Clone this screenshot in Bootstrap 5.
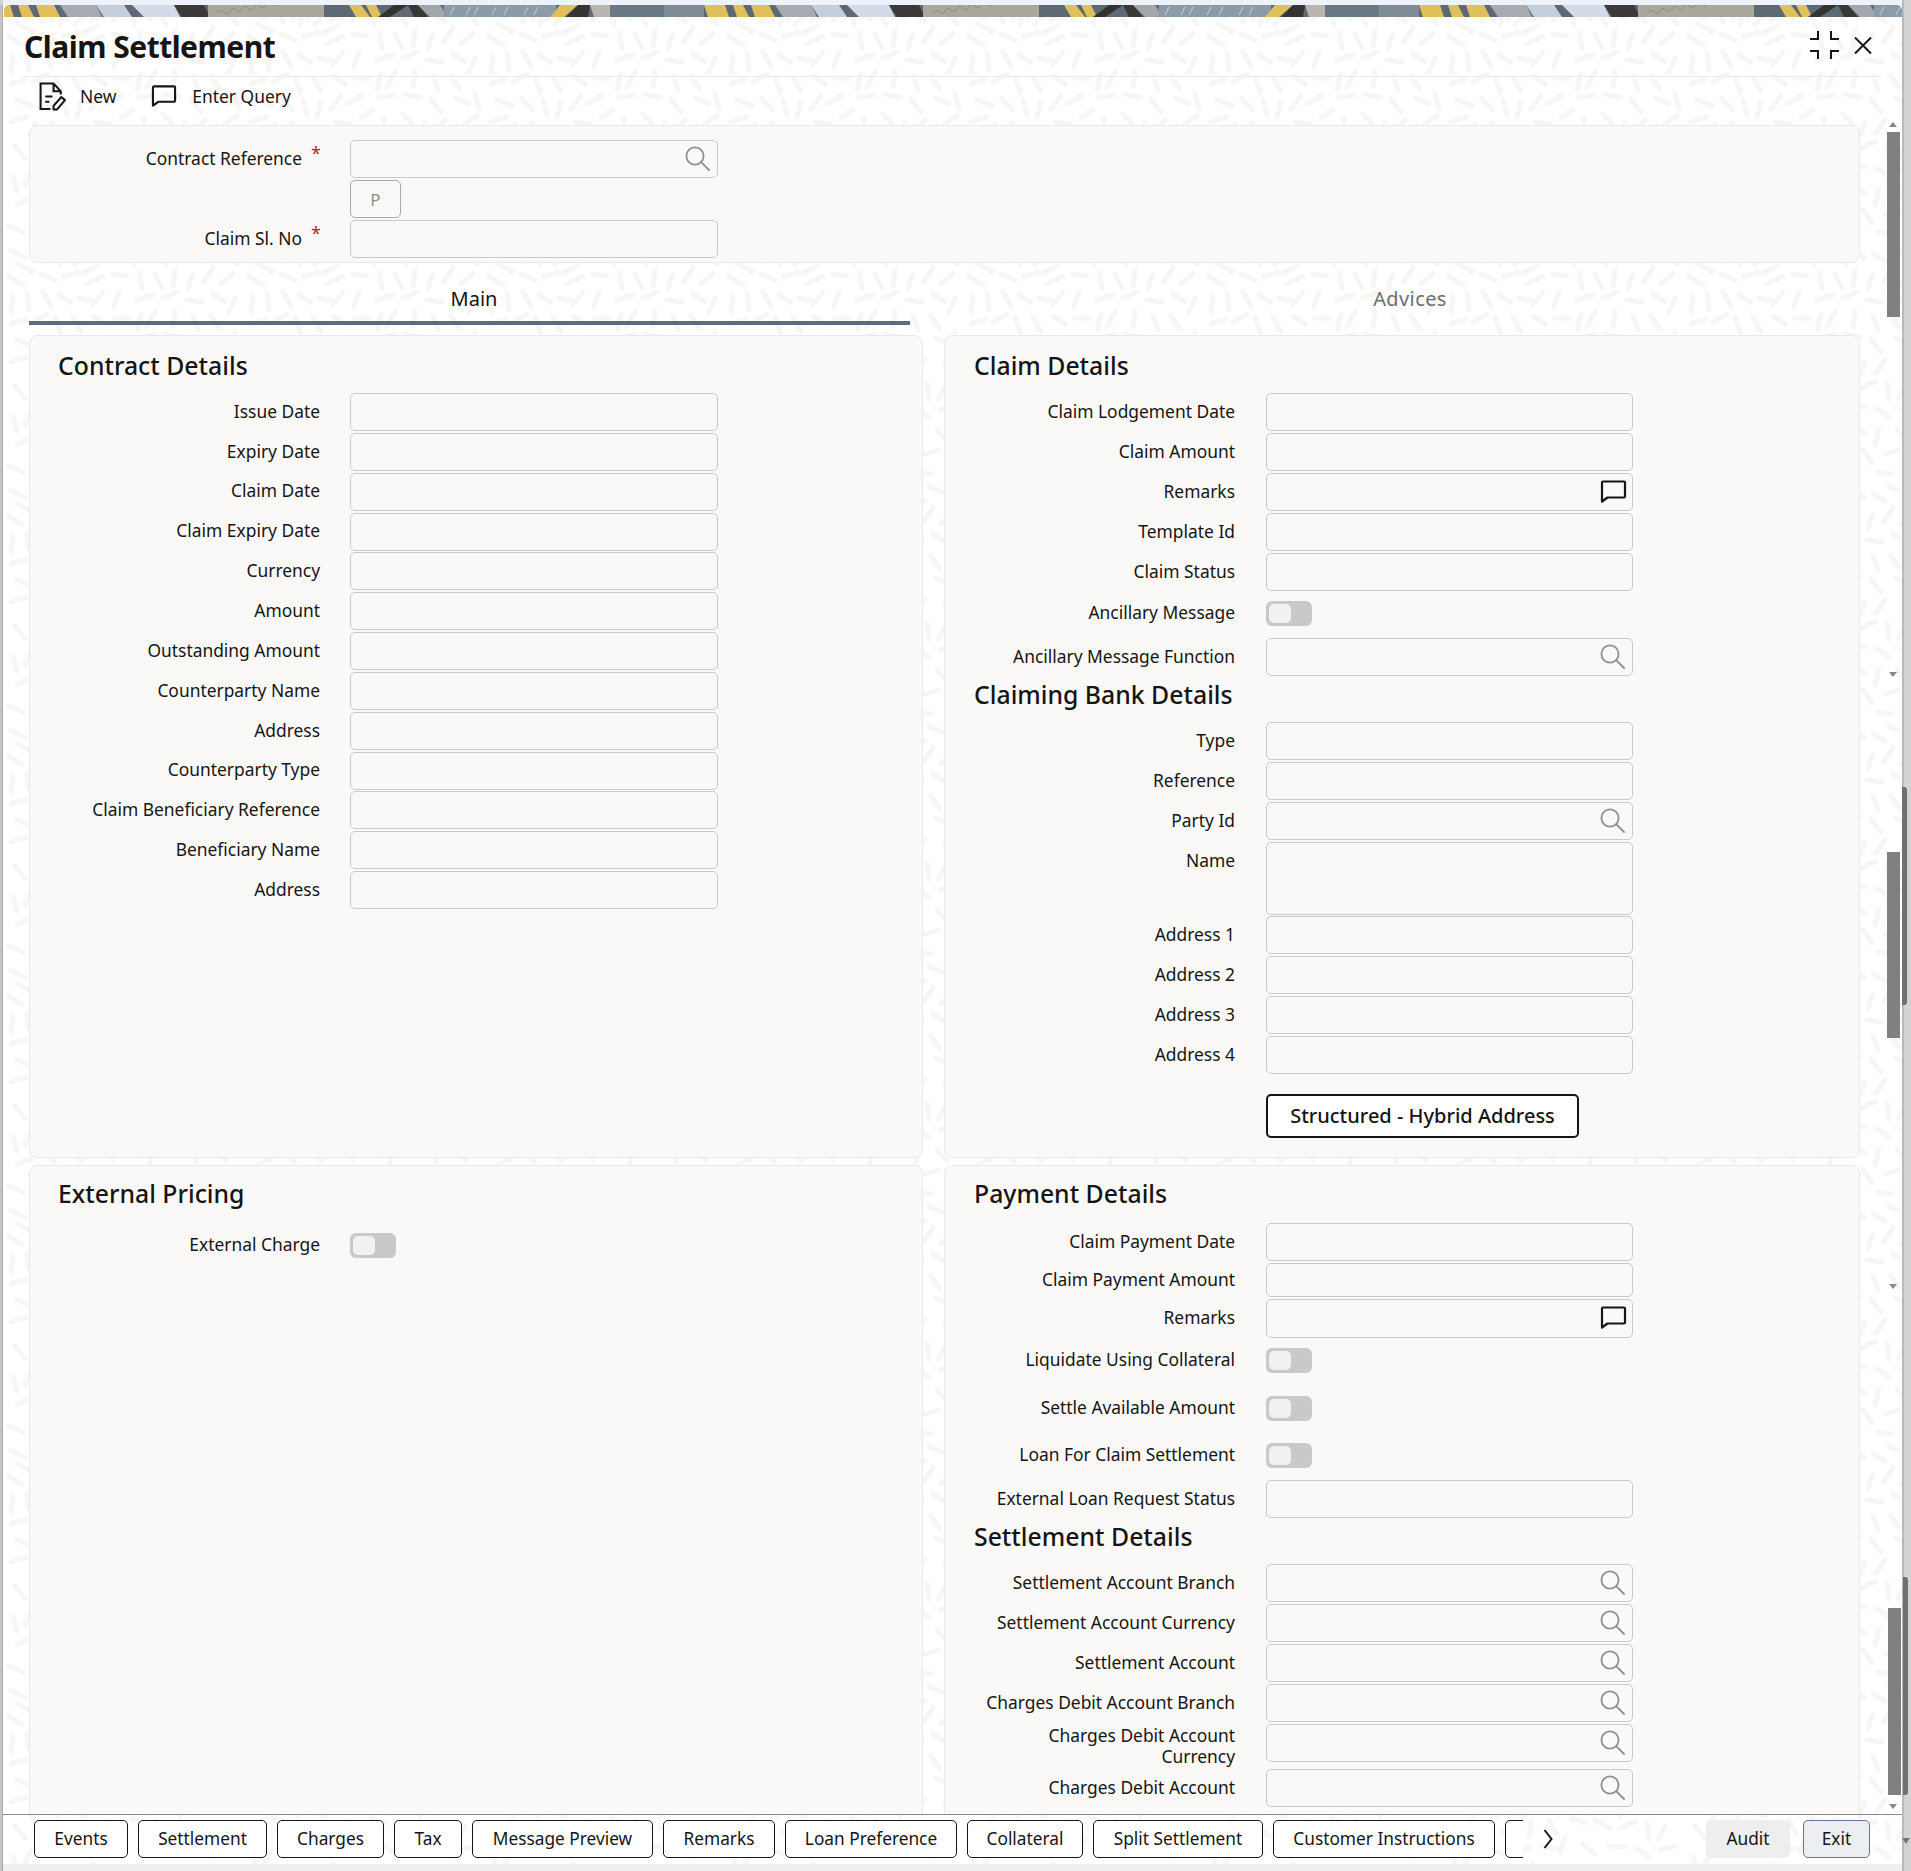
<!DOCTYPE html>
<html lang="en">
<head>
<meta charset="utf-8">
<title>Claim Settlement</title>
<link href="https://cdn.jsdelivr.net/npm/bootstrap@5.3.0/dist/css/bootstrap.min.css" rel="stylesheet">
<style>
html,body{margin:0;padding:0;width:1911px;height:1871px;overflow:hidden}
body{background:#d3d3d3;font-family:"Noto Sans","Open Sans",sans-serif;font-size:17.4px;line-height:21px;color:#161513}
.appx{position:relative;width:1911px;height:1871px;display:flex}
.sideL{width:3px;background:#c4c4c4;margin-top:5px;border-right:1px solid #a9a9a9}
.sideR{width:9px;background:#d3d3d3;border-left:2px solid #b9b9b9}
.winx{width:1899px;display:flex;flex-direction:column;height:1871px;background-color:#fff;
background-image:url("data:image/svg+xml,%3Csvg xmlns='http://www.w3.org/2000/svg' width='240' height='240'%3E%3Cpath fill='none' stroke='%23f6f6f5' stroke-width='5' stroke-linecap='round' d='M8 10l14 7M14 24l16 8M6 36l14 9M34 8l6 14M46 4l4 16M60 10l-3 15M72 6l-8 14M84 12l-12 12M94 26l-14 8M104 14l-16 6M116 6l-6 14M128 10l3 14M142 6l5 14M154 12l9 12M170 8l11 10M190 14l12 7M206 6l14 6M226 12l8 12M38 34l14 6M60 36l16-3M84 44l16-8M110 34l14 2M136 32l3 16M152 34l7 14M172 30l-2 16M190 34l-5 14M210 28l-9 13M230 34l-12 10M10 56l-2 16M24 54l2 15M40 52l8 14M56 54l12 9M76 58l15 3M100 52l-10 12M116 52l-5 15M134 60l16-5M160 58l14-6M184 60l15 2M210 54l12 8M232 58l-6 14M8 84l14-4M30 82l14-8M52 78l6 15M70 78l8 13M90 76l12 8M112 78l14 0M138 74l-4 15M152 72l-8 15M172 72l-2 14M190 76l5 14M208 76l8 12M14 100l15 6M38 98l12 12M60 100l4 14M78 102l-4 15M98 96l-10 13M118 96l-14 8M136 98l15-3M162 94l15 3M188 100l10 12M212 98l14 6M232 94l4 15M8 122l15-5M32 124l-2 15M48 122l7 14M68 130l14 7M92 122l14 2M118 118l12-9M140 118l4 16M160 114l10 11M182 122l-5 15M202 120l-9 13M222 124l12-8M12 146l10 12M34 150l14-3M60 152l14 8M88 142l-2 15M106 140l7 13M128 138l14 5M152 140l15 8M178 148l14-6M204 144l2 15M222 146l-7 13M10 176l4 15M28 170l-6 15M46 168l14 7M72 172l14-4M98 166l15 3M122 158l-5 15M140 164l12 10M166 166l15 1M194 168l12 9M218 170l14-4M14 204l14-5M40 192l12 10M66 190l12 11M90 184l-8 14M108 186l2 15M124 190l13 7M150 188l-3 15M168 186l14 7M196 190l-4 15M214 190l10 11M6 226l14 6M32 216l16-2M60 214l12 8M84 212l14 3M110 214l-7 14M128 212l13 10M154 212l14 8M180 210l9 13M202 214l14-4M226 214l8 14M44 232l13 2M76 232l14-4M124 232l14 2M160 232l14-3M196 232l12 2'/%3E%3C/svg%3E");}
.stripT{height:5px;background:#eef3fb;flex:none}
.bannerx{height:12px;margin-left:1px;flex:none;border-radius:5px 5px 0 0;overflow:hidden;display:block}
.headx{height:60px;margin:0 20px;padding:0 10px 0 1px;flex:none;border-bottom:1px solid #ebebe9}
.titlex{font-size:30px;line-height:40px;font-weight:700;margin:0;letter-spacing:-.5px}
.iconsx{gap:15px;margin-bottom:3px}
.toolx{height:48px;padding:0 0 10px 36px;flex:none}
.lnkx{color:#161513;text-decoration:none}
.tnew{margin-left:14px}
.lnk2{margin-left:35px}
.tenter{margin-left:15px}
.panelx{background:#faf9f7;border:1px solid #ebeae8;border-radius:8px;box-shadow:none}
.ptop{margin-left:26px;width:1831px;height:138px;padding-top:14px;flex:none}
.tabx{margin-left:26px;width:1831px;height:62px;flex:none;margin-bottom:10px;flex-wrap:nowrap}
.tabx .nav-item{flex:none}
.tabx .nav-link{height:62px;line-height:71px;padding:0;font-size:20px;text-align:center;color:#6f6e6c;border-radius:0;border-bottom:4px solid transparent}
.tabx .nav-link.active{color:#161513;border-bottom-color:#5f6b85;width:881px;padding-left:9px}
.tabx .tab2{width:940px;margin-left:30px;letter-spacing:.4px}
.areax{margin-left:26px;width:1831px;height:1479px;overflow:hidden;flex:none}
.gridx{display:grid;grid-template-columns:894px 916px;column-gap:21px;row-gap:7px}
.p1{height:823px}
.p2{height:680px}
.secx{font-size:24.8px;line-height:54px;height:57px;padding:2px 0 0 28px;margin:0;font-weight:500}
.p2 .secx{padding-top:0}
.sec2{height:44px;line-height:32px;padding:0 0 0 29px;font-size:24.8px;margin:0;font-weight:500}
.pr .secx{padding-left:29px}
.frow{display:flex;align-items:center;height:38px;margin-bottom:2px}
.pl .frow{margin-bottom:1.85px}
.flab{width:290px;margin:-1.5px 30px 0 0;text-align:right;flex:none}
.pr .flab{width:290px;margin-right:31px}
.ctlx{width:368px;height:100%;position:relative;flex:none}
.pr .ctlx{width:367px}
.finx{height:100%;min-height:0;padding:0 8px;background:#faf9f7;border:1px solid #cbcac8;border-radius:5px;display:block;resize:none}
.finx:disabled,.finx[readonly]{background:#faf9f7}
.icox{position:absolute;right:8px;top:6px;width:25px;height:25px;display:block}
.icoc{position:absolute;right:6px;top:7px;width:27px;height:23px;display:block}
.tgx{width:46px;height:25px;background:#c9c9c8;border-radius:6px;padding:3px 21px 3px 3px;flex:none}
.tgx i{display:block;width:22px;height:19px;background:#f2f1ef;border-radius:5px}
.ftg{height:25px}
.ftg1{margin-top:10px;margin-bottom:12px}
.ftg2{margin-top:10px;margin-bottom:23px}
.ftg3{margin-bottom:22px}
.ftg4{margin-bottom:12px}
.ftg5{margin-top:10px}
.fname{height:73px;margin-bottom:1px;align-items:flex-start}
.fname .flab{margin-top:0;padding-top:8px}
.h34{height:34px}
.h39{height:39px}
.mt6x{margin-top:7px}
.ftwo .flab{margin-top:5.5px}
.flab2{display:flex;justify-content:flex-end;align-items:center}
.starx{color:#b3261e;line-height:1;margin:0 1px 10px 9px;width:8px;font-size:18px;text-align:center}
.pbtn{width:51px;height:38px;padding:0;background:#faf9f7;border:1px solid #a9a9a7;border-radius:5px;color:#8f8f8d;font-size:17px;line-height:38px;display:block}
.hbtn{width:313px;height:44px;margin:20px 0 0 321px;padding:0;background:#fff;border:2px solid #161513;border-radius:5px;color:#161513;font-size:20px;font-weight:500;line-height:38px;display:block}
.botx{height:50px;border-top:1px solid #8a8a8a;padding:5px 32px 0 31px;flex:none;margin-top:0}
.bscroll{width:1489px;overflow:hidden;gap:10px;flex:none}
.fbtn{height:38px;padding:0;font-size:17.3px;line-height:34px;color:#161513;background:#fff;border:1px solid #161513;border-radius:5px;white-space:nowrap;flex:none}
.fbtn:hover{color:#161513;background:#fff}
.bw1{width:94px}.bw2{width:129px}.bw3{width:107px}.bw4{width:68px}.bw5{width:181px}.bw6{width:112px}.bw7{width:172px}.bw8{width:116px}.bw9{width:170px}.bw10{width:222px}.bw11{width:100px}
.chevx{margin:9px 0 0 20px;width:10px;height:20px;flex:none;display:block}
.abtn{height:38px;width:84px;margin-left:auto;padding:0;background:#eeeeee;border:0;border-radius:5px;color:#161513;font-size:17.3px;line-height:36px}
.ebtn{height:38px;width:67px;margin-left:13px;padding:0;background:#eceef2;border:1px solid #6b7488;border-radius:5px;color:#161513;font-size:17.3px;line-height:34px}
.stripB{height:7px;background:#efefef;flex:none}
.thumbx{position:absolute;left:1887px;width:13px;background:#808080}
.t1{top:132px;height:185px}
.t2{top:852px;height:186px}
.t3{top:1608px;height:187px;left:1888px}
.outx{position:absolute;left:1902px;width:5px;background:#707070;border-radius:0 3px 3px 0}
.o1{top:787px;height:218px}
.o2{top:1577px;height:218px;left:1903px}
.arrx{position:absolute;left:1889px;width:0;height:0;border-left:4px solid transparent;border-right:4px solid transparent}
.aup{top:122px;border-bottom:5px solid #888}
.ad1{top:672px;border-top:5px solid #888}
.ad2{top:1284px;border-top:5px solid #888}
.ad3{top:1804px;border-top:5px solid #888}
.ad4{position:absolute;left:1902px;top:1838px;width:0;height:0;border-left:4px solid transparent;border-right:4px solid transparent;border-top:6px solid #777}
</style>
</head>
<body>
<svg class="d-none" xmlns="http://www.w3.org/2000/svg">
<symbol id="isearch" viewBox="0 0 25 25"><circle cx="10" cy="10" r="8.6" fill="none" stroke="#8f8f8f" stroke-width="1.8"/><path d="M16.4 16.4 24 24" fill="none" stroke="#8f8f8f" stroke-width="1.8" stroke-linecap="round"/></symbol>
<symbol id="icomment" viewBox="0 0 27 23"><path d="M2 2.5a1 1 0 0 1 1-1h21a1 1 0 0 1 1 1v14a1 1 0 0 1-1 1H7.5L2 21.5Z" fill="none" stroke="#161513" stroke-width="2.2" stroke-linejoin="round"/></symbol>
</svg>
<div class="appx">
  <div class="sideL"></div>
  <div class="winx">
    <div class="stripT"></div>
    <svg class="bannerx" width="1898" height="12" xmlns="http://www.w3.org/2000/svg">
<defs><pattern id="bannerpat" width="715" height="12" patternUnits="userSpaceOnUse">
<rect width="715" height="12" fill="#5d6973"/>
<polygon points="14,0 24,0 30,12 18,12" fill="#dfc05a"/><polygon points="32,0 50,0 56,12 36,12" fill="#dfc05a"/>
<polygon points="56,0 92,0 98,12 64,12" fill="#a7abaf"/>
<polygon points="92,0 120,0 128,12 100,12" fill="#c3cfdc"/>
<polygon points="128,0 170,0 176,12 140,12" fill="#d2dce8"/>
<polygon points="170,0 200,0 206,12 178,12" fill="#3c3a38"/>
<rect x="204" width="116" height="12" fill="#aba69e"/>
<path d="M214 8c4-8 8 6 12-2s8 6 12-2 8 6 12-2 8 6 12-2 8 6 12-2 8 6 12-2" fill="none" stroke="#8f8a84"/>
<polygon points="345,0 357,0 366,12 352,12" fill="#dfc05a"/><polygon points="362,0 372,0 378,12 368,12" fill="#dfc05a"/>
<polygon points="390,0 404,0 386,12 374,12" fill="#333230"/><polygon points="404,0 414,0 424,12 410,12" fill="#3a3836"/>
<polygon points="414,0 436,0 444,12 426,12" fill="#a3a7ab"/>
<rect x="440" width="112" height="12" fill="#8d9aa8"/>
<path d="M446 10l4-8M462 10l4-8M470 10l4-8M488 10l4-8M500 10l4-8M520 10l4-8M530 10l4-8" stroke="#c7cfd8"/>
<polygon points="556,0 574,0 560,12 546,12" fill="#dfc05a"/>
<polygon points="574,0 586,0 584,12 562,12" fill="#363432"/>
<polygon points="586,0 606,0 606,12 590,12" fill="#b9b6b0"/>
<rect x="606" width="54" height="12" fill="#6a7885"/><rect x="660" width="40" height="12" fill="#7f8c98"/>
<polygon points="700,0 715,0 715,12 704,12" fill="#dfc05a"/><polygon points="0,0 6,0 10,12 0,12" fill="#dfc05a"/>
</pattern></defs>
<rect width="1898" height="12" fill="url(#bannerpat)"/></svg>
    <header class="headx d-flex align-items-center justify-content-between">
      <h1 class="titlex">Claim Settlement</h1>
      <div class="d-flex align-items-center iconsx">
        <svg width="29" height="28" viewBox="0 0 29 28" fill="none" stroke="#161513" stroke-width="2"><path d="M8 0v8H0M21 0v8h8M0 20h8v8M29 20h-8v8"/></svg>
        <svg width="18" height="17" viewBox="0 0 18 17" fill="none" stroke="#161513" stroke-width="2"><path d="M1 .5 17 16.5M17 .5 1 16.5"/></svg>
      </div>
    </header>
    <nav class="toolx d-flex align-items-center">
      <a class="lnkx d-flex align-items-center" href="#"><svg width="27" height="29" viewBox="0 0 26 28" fill="none" stroke="#161513" stroke-width="2"><path d="M11 26H1.500V1.500H14L21 9v3M14 1.500V9h7M6 14h7M6 19h4"/><path d="M14 26.500V23L21.500 14.500 25 17.500 17.500 26.500Z" stroke-linejoin="round"/></svg><span class="tnew">New</span></a>
      <a class="lnkx d-flex align-items-center lnk2" href="#"><svg width="26" height="24" viewBox="0 0 27 23"><use href="#icomment"/></svg><span class="tenter">Enter Query</span></a>
    </nav>
    <section class="panelx ptop">
      <div class="frow"><div class="flab flab2">Contract Reference<span class="starx">*</span></div><div class="ctlx"><input class="form-control finx" readonly><svg class="icox"><use href="#isearch"/></svg></div></div>
      <div class="frow"><div class="flab"></div><button class="btn pbtn" type="button">P</button></div>
      <div class="frow"><div class="flab flab2">Claim Sl. No<span class="starx">*</span></div><div class="ctlx"><input class="form-control finx" readonly></div></div>
    </section>
    <ul class="nav tabx">
      <li class="nav-item"><a class="nav-link active" href="#">Main</a></li>
      <li class="nav-item tab2"><a class="nav-link" href="#">Advices</a></li>
    </ul>
    <div class="areax">
      <div class="gridx">
        <section class="panelx p1 pl">
          <h2 class="secx">Contract Details</h2>
          <div class="frow"><div class="flab">Issue Date</div><div class="ctlx"><input class="form-control finx" readonly></div></div>
          <div class="frow"><div class="flab">Expiry Date</div><div class="ctlx"><input class="form-control finx" readonly></div></div>
          <div class="frow"><div class="flab">Claim Date</div><div class="ctlx"><input class="form-control finx" readonly></div></div>
          <div class="frow"><div class="flab">Claim Expiry Date</div><div class="ctlx"><input class="form-control finx" readonly></div></div>
          <div class="frow"><div class="flab">Currency</div><div class="ctlx"><input class="form-control finx" readonly></div></div>
          <div class="frow"><div class="flab">Amount</div><div class="ctlx"><input class="form-control finx" readonly></div></div>
          <div class="frow"><div class="flab">Outstanding Amount</div><div class="ctlx"><input class="form-control finx" readonly></div></div>
          <div class="frow"><div class="flab">Counterparty Name</div><div class="ctlx"><input class="form-control finx" readonly></div></div>
          <div class="frow"><div class="flab">Address</div><div class="ctlx"><input class="form-control finx" readonly></div></div>
          <div class="frow"><div class="flab">Counterparty Type</div><div class="ctlx"><input class="form-control finx" readonly></div></div>
          <div class="frow"><div class="flab">Claim Beneficiary Reference</div><div class="ctlx"><input class="form-control finx" readonly></div></div>
          <div class="frow"><div class="flab">Beneficiary Name</div><div class="ctlx"><input class="form-control finx" readonly></div></div>
          <div class="frow"><div class="flab">Address</div><div class="ctlx"><input class="form-control finx" readonly></div></div>
        </section>
        <section class="panelx p1 pr">
          <h2 class="secx">Claim Details</h2>
          <div class="frow"><div class="flab">Claim Lodgement Date</div><div class="ctlx"><input class="form-control finx" readonly></div></div>
          <div class="frow"><div class="flab">Claim Amount</div><div class="ctlx"><input class="form-control finx" readonly></div></div>
          <div class="frow"><div class="flab">Remarks</div><div class="ctlx"><input class="form-control finx" readonly><svg class="icoc"><use href="#icomment"/></svg></div></div>
          <div class="frow"><div class="flab">Template Id</div><div class="ctlx"><input class="form-control finx" readonly></div></div>
          <div class="frow"><div class="flab">Claim Status</div><div class="ctlx"><input class="form-control finx" readonly></div></div>
          <div class="frow ftg ftg1"><div class="flab">Ancillary Message</div><div class="tgx" role="switch" aria-checked="false"><i></i></div></div>
          <div class="frow"><div class="flab">Ancillary Message Function</div><div class="ctlx"><input class="form-control finx" readonly><svg class="icox"><use href="#isearch"/></svg></div></div>
          <h2 class="sec2">Claiming Bank Details</h2>
          <div class="frow"><div class="flab">Type</div><div class="ctlx"><input class="form-control finx" readonly></div></div>
          <div class="frow"><div class="flab">Reference</div><div class="ctlx"><input class="form-control finx" readonly></div></div>
          <div class="frow"><div class="flab">Party Id</div><div class="ctlx"><input class="form-control finx" readonly><svg class="icox"><use href="#isearch"/></svg></div></div>
          <div class="frow fname"><div class="flab">Name</div><div class="ctlx"><textarea class="form-control finx" readonly></textarea></div></div>
          <div class="frow"><div class="flab">Address 1</div><div class="ctlx"><input class="form-control finx" readonly></div></div>
          <div class="frow"><div class="flab">Address 2</div><div class="ctlx"><input class="form-control finx" readonly></div></div>
          <div class="frow"><div class="flab">Address 3</div><div class="ctlx"><input class="form-control finx" readonly></div></div>
          <div class="frow"><div class="flab">Address 4</div><div class="ctlx"><input class="form-control finx" readonly></div></div>
          <button class="btn hbtn" type="button">Structured - Hybrid Address</button>
        </section>
        <section class="panelx p2 pl">
          <h2 class="secx">External Pricing</h2>
          <div class="frow ftg ftg5"><div class="flab">External Charge</div><div class="tgx" role="switch" aria-checked="false"><i></i></div></div>
        </section>
        <section class="panelx p2 pr">
          <h2 class="secx">Payment Details</h2>
          <div class="frow"><div class="flab">Claim Payment Date</div><div class="ctlx"><input class="form-control finx" readonly></div></div>
          <div class="frow h34"><div class="flab">Claim Payment Amount</div><div class="ctlx"><input class="form-control finx" readonly></div></div>
          <div class="frow h39"><div class="flab">Remarks</div><div class="ctlx"><input class="form-control finx" readonly><svg class="icoc"><use href="#icomment"/></svg></div></div>
          <div class="frow ftg ftg2"><div class="flab">Liquidate Using Collateral</div><div class="tgx" role="switch" aria-checked="false"><i></i></div></div>
          <div class="frow ftg ftg3"><div class="flab">Settle Available Amount</div><div class="tgx" role="switch" aria-checked="false"><i></i></div></div>
          <div class="frow ftg ftg4"><div class="flab">Loan For Claim Settlement</div><div class="tgx" role="switch" aria-checked="false"><i></i></div></div>
          <div class="frow"><div class="flab">External Loan Request Status</div><div class="ctlx"><input class="form-control finx" readonly></div></div>
          <h2 class="sec2">Settlement Details</h2>
          <div class="frow"><div class="flab">Settlement Account Branch</div><div class="ctlx"><input class="form-control finx" readonly><svg class="icox"><use href="#isearch"/></svg></div></div>
          <div class="frow"><div class="flab">Settlement Account Currency</div><div class="ctlx"><input class="form-control finx" readonly><svg class="icox"><use href="#isearch"/></svg></div></div>
          <div class="frow"><div class="flab">Settlement Account</div><div class="ctlx"><input class="form-control finx" readonly><svg class="icox"><use href="#isearch"/></svg></div></div>
          <div class="frow"><div class="flab">Charges Debit Account Branch</div><div class="ctlx"><input class="form-control finx" readonly><svg class="icox"><use href="#isearch"/></svg></div></div>
          <div class="frow ftwo"><div class="flab">Charges Debit Account<br>Currency</div><div class="ctlx"><input class="form-control finx" readonly><svg class="icox"><use href="#isearch"/></svg></div></div>
          <div class="frow mt6x"><div class="flab">Charges Debit Account</div><div class="ctlx"><input class="form-control finx" readonly><svg class="icox"><use href="#isearch"/></svg></div></div>
        </section>
      </div>
    </div>
    <footer class="botx d-flex align-items-start">
      <div class="bscroll d-flex">
        <button class="btn fbtn bw1" type="button">Events</button>
        <button class="btn fbtn bw2" type="button">Settlement</button>
        <button class="btn fbtn bw3" type="button">Charges</button>
        <button class="btn fbtn bw4" type="button">Tax</button>
        <button class="btn fbtn bw5" type="button">Message Preview</button>
        <button class="btn fbtn bw6" type="button">Remarks</button>
        <button class="btn fbtn bw7" type="button">Loan Preference</button>
        <button class="btn fbtn bw8" type="button">Collateral</button>
        <button class="btn fbtn bw9" type="button">Split Settlement</button>
        <button class="btn fbtn bw10" type="button">Customer Instructions</button>
        <button class="btn fbtn bw11" type="button" aria-label="More"></button>
      </div>
      <svg class="chevx" viewBox="0 0 10 20" fill="none" stroke="#161513" stroke-width="2"><path d="M1.500 1 8.500 10 1.500 19"/></svg>
      <button class="btn abtn" type="button">Audit</button>
      <button class="btn ebtn" type="button">Exit</button>
    </footer>
    <div class="stripB"></div>
  </div>
  <div class="sideR"></div>
  <div class="thumbx t1"></div><div class="thumbx t2"></div><div class="thumbx t3"></div>
  <div class="outx o1"></div><div class="outx o2"></div>
  <div class="arrx aup"></div><div class="arrx ad1"></div><div class="arrx ad2"></div><div class="arrx ad3"></div><div class="ad4"></div>
</div>
<script src="https://cdn.jsdelivr.net/npm/bootstrap@5.3.0/dist/js/bootstrap.bundle.min.js"></script>
</body>
</html>
